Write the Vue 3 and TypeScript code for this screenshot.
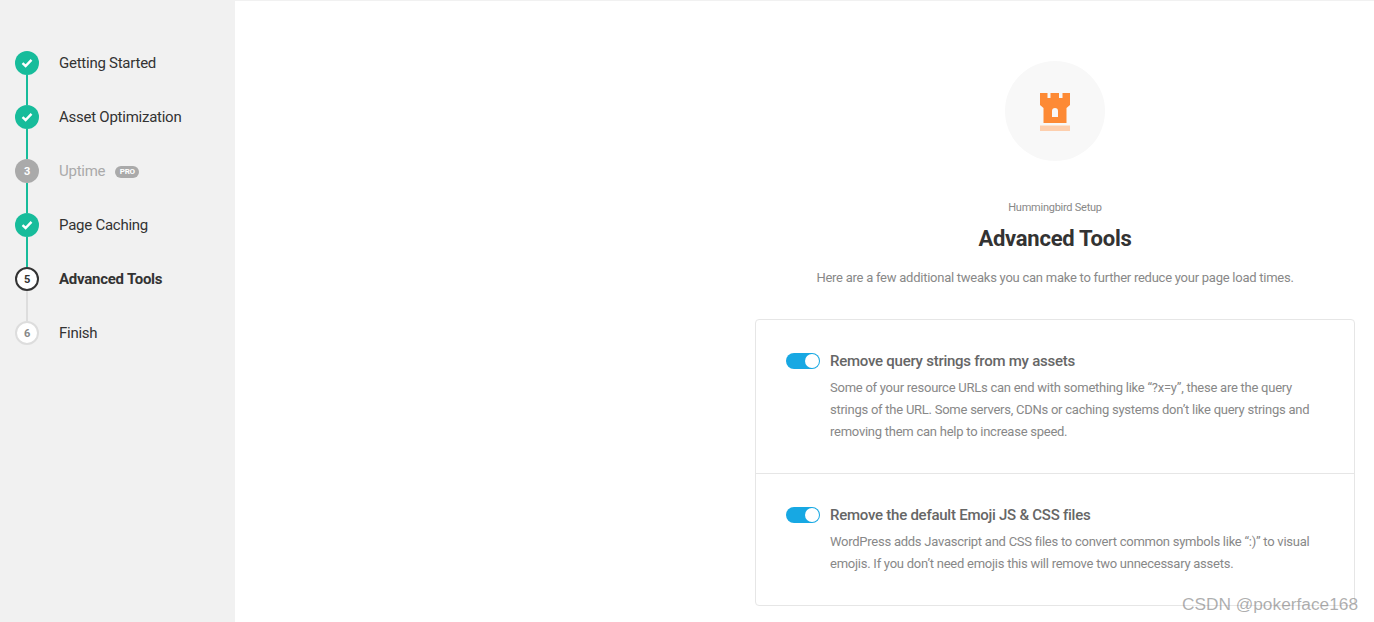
<template>
  <div class="page">
    <aside class="sidebar">
      <ul class="steps">
        <li v-for="(step, i) in steps" :key="step.label" class="step" :class="`step--${step.state}`">
          <div class="marker">
            <span class="dot">
              <svg v-if="step.state === 'done'" width="12" height="10" viewBox="0 0 12 10">
                <path d="M1.5 5.2 4.6 8 10.5 1.8" fill="none" stroke="#fff" stroke-width="2.4" />
              </svg>
              <template v-else>{{ i + 1 }}</template>
            </span>
            <span v-if="i < steps.length - 1" class="line" />
          </div>
          <span class="label">{{ step.label }}</span>
          <span v-if="step.state === 'locked'" class="pro">PRO</span>
        </li>
      </ul>
    </aside>

    <main class="main">
      <div class="column">
        <header class="head">
          <div class="logo">
            <svg class="rook" width="30" height="38" viewBox="0 0 30 38">
              <path
                fill="#fd8a35"
                fill-rule="evenodd"
                d="M0 0H7.5V5H10.5V0H19V5H22.5V0H30V12L26.5 15V30H3.5V15L0 12ZM12 24H18V18A3 3 0 0 0 12 18Z"
              />
              <rect y="32.5" width="30" height="5.5" fill="#fdcfae" />
            </svg>
          </div>
          <p class="eyebrow">Hummingbird Setup</p>
          <h1 class="title">Advanced Tools</h1>
          <p class="intro">Here are a few additional tweaks you can make to further reduce your page load times.</p>
        </header>

        <section class="card">
          <div v-for="opt in options" :key="opt.title" class="option">
            <span class="toggle"><span class="knob" /></span>
            <div class="text">
              <h2 class="option-title">{{ opt.title }}</h2>
              <p class="option-desc">{{ opt.desc }}</p>
            </div>
          </div>
        </section>
      </div>
    </main>

    <span class="watermark">CSDN @pokerface168</span>
  </div>
</template>

<script setup lang="ts">
type StepState = 'done' | 'locked' | 'current' | 'todo';

const steps: { label: string; state: StepState }[] = [
  { label: 'Getting Started', state: 'done' },
  { label: 'Asset Optimization', state: 'done' },
  { label: 'Uptime', state: 'locked' },
  { label: 'Page Caching', state: 'done' },
  { label: 'Advanced Tools', state: 'current' },
  { label: 'Finish', state: 'todo' },
];

const options = [
  {
    title: 'Remove query strings from my assets',
    desc: 'Some of your resource URLs can end with something like “?x=y”, these are the query strings of the URL. Some servers, CDNs or caching systems don’t like query strings and removing them can help to increase speed.',
  },
  {
    title: 'Remove the default Emoji JS & CSS files',
    desc: 'WordPress adds Javascript and CSS files to convert common symbols like “:)” to visual emojis. If you don’t need emojis this will remove two unnecessary assets.',
  },
];
</script>

<style>
html,
body {
  height: 100%;
  overflow: hidden;
}
</style>

<style scoped>
.page {
  position: relative;
  display: flex;
  height: 622px;
  overflow: hidden;
  font-family: Roboto, "Liberation Sans", sans-serif;
  letter-spacing: -0.25px;
  background: #fff;
}

.sidebar {
  flex: 0 0 235px;
  background: #f1f1f1;
}

.steps {
  list-style: none;
  margin: 0;
  padding: 51px 0 0 15px;
}

.step {
  display: flex;
  height: 54px;
  color: #333;
  font-size: 15px;
}

.marker {
  display: flex;
  flex-direction: column;
  align-items: center;
  width: 24px;
  margin-right: 20px;
}

.dot {
  flex: 0 0 24px;
  display: flex;
  align-items: center;
  justify-content: center;
  box-sizing: border-box;
  width: 24px;
  border-radius: 50%;
  font-size: 11px;
  font-weight: 700;
}

.line {
  flex: 1;
  width: 2px;
  background: #17bc9b;
}

.label {
  line-height: 24px;
}

.step--done .dot {
  background: #17bc9b;
}

.step--locked .dot {
  background: #aaa;
  color: #fff;
}

.step--locked .label {
  color: #aaa;
}

.step--current .dot {
  border: 2px solid #333;
  background: #fff;
  color: #333;
}

.step--current .label {
  font-weight: 700;
}

.step--current .line {
  background: #ddd;
}

.step--todo .dot {
  border: 2px solid #ddd;
  background: #fff;
  color: #888;
}

.pro {
  align-self: flex-start;
  margin: 7px 0 0 10px;
  padding: 0 4.5px;
  height: 12px;
  border-radius: 6px;
  background: #aaa;
  color: #fff;
  font-size: 8px;
  font-weight: 700;
  line-height: 12px;
}

.main {
  flex: 1;
  display: flex;
  justify-content: flex-end;
  padding-right: 19px;
  border-top: 1px solid #f1f1f1;
}

.column {
  width: 600px;
}

.head {
  display: flex;
  flex-direction: column;
  align-items: center;
  padding-top: 60px;
  text-align: center;
}

.logo {
  display: flex;
  align-items: center;
  justify-content: center;
  width: 100px;
  height: 100px;
  border-radius: 50%;
  background: #f8f8f8;
}

.rook {
  margin-top: 2px;
}

.eyebrow {
  margin: 39px 0 0;
  color: #888;
  font-size: 11px;
  line-height: 16px;
}

.title {
  margin: 8px 0 0;
  color: #333;
  font-size: 22px;
  font-weight: 700;
  line-height: 30px;
}

.intro {
  margin: 13px 0 0;
  color: #888;
  font-size: 13px;
  line-height: 22px;
}

.card {
  margin-top: 30px;
  border: 1px solid #e6e6e6;
  border-radius: 4px;
}

.option {
  display: flex;
  padding: 30px;
}

.option + .option {
  border-top: 1px solid #e6e6e6;
}

.toggle {
  position: relative;
  flex: 0 0 34px;
  height: 16px;
  margin: 3px 10px 0 0;
  border-radius: 8px;
  background: #17a8e3;
}

.knob {
  position: absolute;
  top: 1px;
  right: 1px;
  width: 14px;
  height: 14px;
  border-radius: 50%;
  background: #fff;
}

.option-title {
  margin: 0;
  color: #666;
  font-size: 15px;
  font-weight: 500;
  line-height: 22px;
}

.option-desc {
  margin: 5px 0 0;
  color: #888;
  font-size: 13px;
  line-height: 22px;
}

.watermark {
  position: absolute;
  right: 16px;
  top: 594px;
  color: rgba(120, 120, 120, 0.6);
  font-family: "Liberation Sans", sans-serif;
  font-size: 17.3px;
  letter-spacing: 0;
  line-height: 20px;
  white-space: nowrap;
}
</style>
